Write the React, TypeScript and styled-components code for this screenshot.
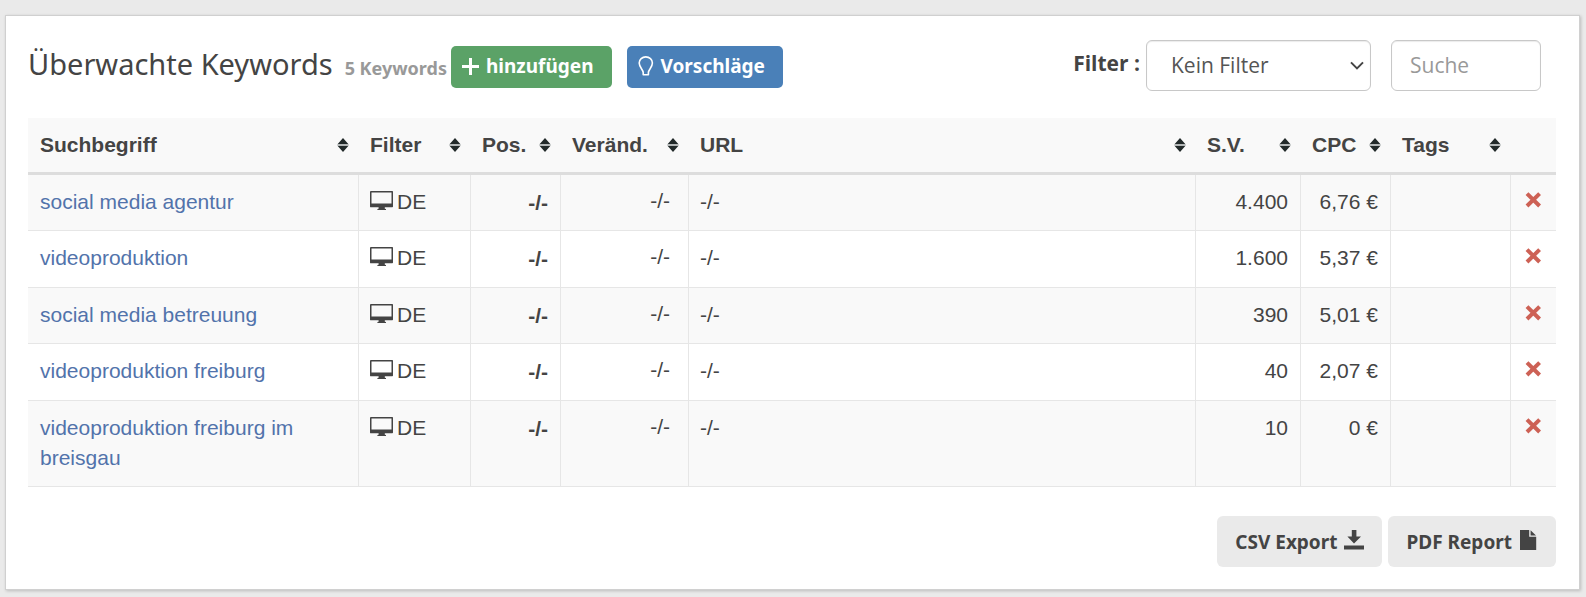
import React from "react";
import styled, { createGlobalStyle, css } from "styled-components";

const uiFont = '"Open Sans", "Noto Sans", sans-serif';
const headingFont = '"Noto Sans", "Open Sans", sans-serif';
const dataFont = '"Liberation Sans", Arial, sans-serif';
const ink = "#444444";

const GlobalStyle = createGlobalStyle`
  *, *::before, *::after { box-sizing: border-box; }
  body {
    margin: 0;
    background: #eaeaea;
    color: ${ink};
    font-family: ${uiFont};
  }
`;

const Page = styled.main`
  padding: 15px 6px 8px 5px;
`;

const Card = styled.section`
  padding: 24px 23px 22px 22px;
  background: #ffffff;
  border: 1px solid #d0d0d0;
  box-shadow: 1px 1px 3px rgba(0, 0, 0, 0.2);
`;

const Toolbar = styled.header`
  display: flex;
  align-items: flex-start;
  justify-content: space-between;
  padding-bottom: 27px;
`;

const TitleGroup = styled.div`
  display: flex;
  align-items: flex-start;
  padding-top: 6px;
`;

const Title = styled.h1`
  margin: 0 4px 0 0;
  font: 400 29px/36px ${headingFont};
  white-space: nowrap;
`;

const Count = styled.small`
  margin-left: 12px;
  color: #999999;
  font-size: 18px;
  font-weight: 700;
`;

const Actions = styled.div`
  display: flex;
  gap: 15px;
`;

const ActionButton = styled.button<{ $tone: "green" | "blue" }>`
  display: flex;
  align-items: center;
  gap: 7px;
  height: 42px;
  padding: 0 18px 2px 11px;
  border: 0;
  border-radius: 5px;
  background: ${({ $tone }) => ($tone === "green" ? "#5ba267" : "#4a80b8")};
  color: #ffffff;
  font: 700 19px/28px ${headingFont};
`;

const Filters = styled.div`
  display: flex;
  align-items: center;
  padding-right: 15px;
`;

const FilterLabel = styled.label`
  padding: 0 6px 5px 0;
  font-size: 21px;
  line-height: 28px;
  font-weight: 700;
`;

const field = css`
  height: 51px;
  border: 1px solid #c8c8c8;
  border-radius: 6px;
  background: #ffffff;
  box-shadow: inset 0 1px 1px rgba(0, 0, 0, 0.08);
  color: #555555;
  font: 400 21px/28px ${uiFont};
`;

const SelectWrap = styled.span`
  position: relative;
  display: flex;
  margin-right: 20px;
`;

const Select = styled.select`
  ${field}
  width: 225px;
  padding: 0 30px 2px 24px;
  appearance: none;
`;

const Chevron = styled.svg`
  position: absolute;
  right: 6px;
  top: 20px;
  pointer-events: none;
`;

const Search = styled.input`
  ${field}
  width: 150px;
  padding: 0 18px 2px;
  &::placeholder { color: #999999; opacity: 1; }
`;

const Table = styled.table`
  width: 100%;
  table-layout: fixed;
  border-collapse: separate;
  border-spacing: 0;
  font: 400 21px/30px ${dataFont};
`;

const Col = styled.col<{ $w?: number }>`
  width: ${({ $w }) => ($w ? `${$w}px` : "auto")};
`;

const HeadCell = styled.th`
  padding: 12px 9px 12px 12px;
  background: #f9f9f9;
  border-bottom: 3px solid #dddddd;
  font-weight: 700;
  text-align: left;
`;

const SortButton = styled.button`
  display: flex;
  align-items: center;
  justify-content: space-between;
  width: 100%;
  padding: 0;
  border: 0;
  background: none;
  color: inherit;
  font: inherit;
`;

const Row = styled.tr`
  height: 56px;
  background: #f9f9f9;
  &:nth-child(even) {
    height: 57px;
    background: #ffffff;
  }
`;

const Cell = styled.td<{ $align?: "right" | "center" }>`
  padding: 12px 12px 13px 11px;
  border-bottom: 1px solid #e6e6e6;
  border-left: 1px solid #e6e6e6;
  text-align: ${({ $align }) => $align ?? "left"};
  vertical-align: top;
  &:first-child { padding-left: 12px; border-left: 0; }
`;

const PositionCell = styled(Cell)`
  padding-top: 13px;
  padding-bottom: 12px;
  font-weight: 700;
`;

const ChangeCell = styled(Cell)`
  padding: 11px 18px 14px 11px;
`;

const RemoveCell = styled(Cell)`
  padding: 17px 14px 13px 14px;
`;

const Keyword = styled.a`
  color: #5273ab;
  text-decoration: none;
`;

const Device = styled.span`
  display: flex;
  gap: 3px;
`;

const DeviceIcon = styled.svg`
  margin-top: 4px;
`;

const RemoveButton = styled.button`
  display: block;
  padding: 0;
  border: 0;
  background: none;
  line-height: 0;
`;

const Footer = styled.footer`
  display: flex;
  justify-content: flex-end;
  gap: 6px;
  padding-top: 29px;
`;

const ExportButton = styled.button`
  display: flex;
  align-items: center;
  gap: 7px;
  height: 51px;
  padding: 0 18px;
  border: 0;
  border-radius: 6px;
  background: #eaeaea;
  color: ${ink};
  font: 700 19px/28px ${headingFont};
  svg { margin-bottom: 3px; }
`;

const SortIcon = () => (
  <svg width="12" height="14" viewBox="0 0 12 14" aria-hidden="true">
    <path d="M6 0 11.5 6.2H.5zM6 14 11.5 7.8H.5z" fill="#222a2a" />
    <path d="M.5 6h11v2H.5z" fill="#b4b8b8" />
  </svg>
);

const PlusIcon = () => (
  <svg width="17" height="17" viewBox="0 0 17 17" aria-hidden="true">
    <path d="M7 0h3v7H17v3H10V17H7V10H0V7h7z" fill="#fff" />
  </svg>
);

const BulbIcon = () => (
  <svg width="16" height="20" viewBox="0 0 16 20" aria-hidden="true">
    <path
      d="M5.2 18.8V16.4C4.9 13.6 1.2 11 1.2 7A6.6 6.1 0 0 1 14.4 7C14.4 11 10.7 13.6 10.4 16.4V18.8Z"
      fill="none"
      stroke="#fff"
      strokeWidth="1.6"
      strokeLinejoin="round"
    />
  </svg>
);

const MonitorIcon = () => (
  <DeviceIcon width="24" height="20" viewBox="0 0 24 20" aria-hidden="true">
    <path
      fillRule="evenodd"
      d="M.9 0h21.4q.7 0 .7.7V15.6q0 .7-.7.7H14.8v1.5l1.2.3v.9H7.4v-.9l1.2-.3v-1.5H.9q-.9 0-.9-.9V.9Q0 0 .9 0zM1.5 1.6v10.8h20V1.6z"
      fill={ink}
    />
  </DeviceIcon>
);

const CrossIcon = () => (
  <svg width="17" height="16" viewBox="0 0 17 16" aria-hidden="true">
    <path d="M2 1.6 14.6 14M14.6 1.6 2 14" stroke="#cd6155" strokeWidth="4" fill="none" />
  </svg>
);

const DownloadIcon = () => (
  <svg width="20" height="20" viewBox="0 0 20 20" aria-hidden="true">
    <path d="M7.8 0h4.6v6.4H17L10 13.4 3.4 6.4h4.4zM0 15.4h20V19.4H0z" fill={ink} />
  </svg>
);

const FileIcon = () => (
  <svg width="19" height="20" viewBox="0 0 19 20" aria-hidden="true">
    <path d="M1 0h9.2v6.8H17.2V20H1zM11.6.2 17 5.4H11.6z" fill={ink} />
  </svg>
);

const columns: { label: string; width?: number }[] = [
  { label: "Suchbegriff", width: 330 },
  { label: "Filter", width: 112 },
  { label: "Pos.", width: 90 },
  { label: "Veränd.", width: 128 },
  { label: "URL" },
  { label: "S.V.", width: 105 },
  { label: "CPC", width: 90 },
  { label: "Tags", width: 120 },
];

const keywords = [
  { term: "social media agentur", volume: "4.400", cpc: "6,76 €" },
  { term: "videoproduktion", volume: "1.600", cpc: "5,37 €" },
  { term: "social media betreuung", volume: "390", cpc: "5,01 €" },
  { term: "videoproduktion freiburg", volume: "40", cpc: "2,07 €" },
  { term: "videoproduktion freiburg im breisgau", volume: "10", cpc: "0 €" },
];

export default function App() {
  return (
    <>
      <GlobalStyle />
      <Page>
        <Card>
          <Toolbar>
            <TitleGroup>
              <Title>
                Überwachte Keywords<Count>5 Keywords</Count>
              </Title>
              <Actions>
                <ActionButton type="button" $tone="green">
                  <PlusIcon />
                  hinzufügen
                </ActionButton>
                <ActionButton type="button" $tone="blue">
                  <BulbIcon />
                  Vorschläge
                </ActionButton>
              </Actions>
            </TitleGroup>
            <Filters>
              <FilterLabel htmlFor="keyword-filter">Filter :</FilterLabel>
              <SelectWrap>
                <Select id="keyword-filter" defaultValue="none">
                  <option value="none">Kein Filter</option>
                </Select>
                <Chevron width="16" height="12" viewBox="0 0 16 12" aria-hidden="true">
                  <path d="M2 2.4 8 8.4 14 2.4" fill="none" stroke={ink} strokeWidth="2" />
                </Chevron>
              </SelectWrap>
              <Search type="search" placeholder="Suche" aria-label="Suche" />
            </Filters>
          </Toolbar>
          <Table>
            <colgroup>
              {columns.map((c) => (
                <Col key={c.label} $w={c.width} />
              ))}
              <Col $w={46} />
            </colgroup>
            <thead>
              <tr>
                {columns.map((c) => (
                  <HeadCell key={c.label} scope="col">
                    <SortButton type="button">
                      {c.label}
                      <SortIcon />
                    </SortButton>
                  </HeadCell>
                ))}
                <HeadCell aria-label="Entfernen" />
              </tr>
            </thead>
            <tbody>
              {keywords.map((k) => (
                <Row key={k.term}>
                  <Cell>
                    <Keyword href="#">{k.term}</Keyword>
                  </Cell>
                  <Cell>
                    <Device>
                      <MonitorIcon />
                      DE
                    </Device>
                  </Cell>
                  <PositionCell $align="right">-/-</PositionCell>
                  <ChangeCell $align="right">-/-</ChangeCell>
                  <Cell>-/-</Cell>
                  <Cell $align="right">{k.volume}</Cell>
                  <Cell $align="right">{k.cpc}</Cell>
                  <Cell />
                  <RemoveCell>
                    <RemoveButton type="button" aria-label={`${k.term} entfernen`}>
                      <CrossIcon />
                    </RemoveButton>
                  </RemoveCell>
                </Row>
              ))}
            </tbody>
          </Table>
          <Footer>
            <ExportButton type="button">
              CSV Export
              <DownloadIcon />
            </ExportButton>
            <ExportButton type="button">
              PDF Report
              <FileIcon />
            </ExportButton>
          </Footer>
        </Card>
      </Page>
    </>
  );
}
